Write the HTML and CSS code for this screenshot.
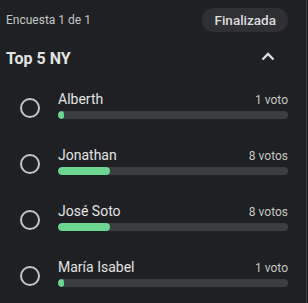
FILE: index.html
```html
<!DOCTYPE html>
<html lang="es">

<head>
    <meta charset="UTF-8">
    <meta name="viewport" content="width=device-width, initial-scale=1.0">
    <title>Encuesta</title>
    <link rel="stylesheet" href="styles.css">
</head>

<body>
    <div class="panel">
        <div class="cabecera">
            <span class="contador">Encuesta 1 de 1</span>
            <span class="estado">Finalizada</span>
        </div>

        <div class="titulo">
            <h2>Top 5 NY</h2>
            <svg class="chevron" width="14" height="9" viewBox="0 0 14 9">
                <path d="M1.5 7.5 L7 2 L12.5 7.5" fill="none" stroke="#dcdcdc" stroke-width="2.4" />
            </svg>
        </div>

        <div class="opciones">
            <div class="opcion">
                <div class="radio"></div>
                <div class="datos">
                    <div class="fila">
                        <span class="nombre">Alberth</span>
                        <span class="votos">1 voto</span>
                    </div>
                    <div class="barra"><div class="relleno" style="width: 2.8%"></div></div>
                </div>
            </div>
            <div class="opcion">
                <div class="radio"></div>
                <div class="datos">
                    <div class="fila">
                        <span class="nombre">Jonathan</span>
                        <span class="votos">8 votos</span>
                    </div>
                    <div class="barra"><div class="relleno" style="width: 22.4%"></div></div>
                </div>
            </div>
            <div class="opcion">
                <div class="radio"></div>
                <div class="datos">
                    <div class="fila">
                        <span class="nombre">José Soto</span>
                        <span class="votos">8 votos</span>
                    </div>
                    <div class="barra"><div class="relleno" style="width: 22.4%"></div></div>
                </div>
            </div>
            <div class="opcion">
                <div class="radio"></div>
                <div class="datos">
                    <div class="fila">
                        <span class="nombre">María Isabel</span>
                        <span class="votos">1 voto</span>
                    </div>
                    <div class="barra"><div class="relleno" style="width: 2.8%"></div></div>
                </div>
            </div>
        </div>
    </div>
</body>

</html>
```

FILE: styles.css
```css
body {
    margin: 0;
    background: #1f2023;
    color: #e3e3e3;
    font-family: Roboto, 'Liberation Sans', sans-serif;
}

.panel {
    width: 282px;
    height: 303px;
    padding: 8px 18px 0 6px;
    border-right: 1px solid #3a3b3e;
    overflow: hidden;
}

.cabecera {
    display: flex;
    justify-content: space-between;
    align-items: center;
    height: 24px;
}

.contador {
    font-size: 12px;
    color: #c4c7c5;
}

.estado {
    background: #2f3033;
    color: #dcdcdc;
    font-size: 13.5px;
    font-weight: 500;
    line-height: 24px;
    padding: 0 12px;
    border-radius: 12px;
}

.titulo {
    display: flex;
    justify-content: space-between;
    align-items: center;
    margin-top: 17px;
    height: 20px;
}

.titulo h2 {
    margin: 0;
    font-size: 16px;
    font-weight: 700;
    line-height: 20px;
    color: #e3e3e3;
}

.chevron {
    margin-right: 13px;
    margin-top: -6px;
}

.opciones {
    display: flex;
    flex-direction: column;
    gap: 28px;
    margin-top: 22px;
}

.opcion {
    display: flex;
    align-items: center;
}

.radio {
    width: 16px;
    height: 16px;
    border: 2px solid #c4c7c5;
    border-radius: 50%;
    margin: 6px 18px 0 14px;
    flex-shrink: 0;
}

.datos {
    flex: 1;
}

.fila {
    display: flex;
    justify-content: space-between;
    align-items: baseline;
    height: 16px;
    line-height: 16px;
}

.nombre {
    font-size: 14px;
    color: #e3e3e3;
}

.votos {
    font-size: 12px;
    color: #c4c7c5;
}

.barra {
    margin-top: 4px;
    height: 8px;
    background: #3c3d40;
    border-radius: 4px;
    overflow: hidden;
}

.relleno {
    height: 100%;
    background: #6ad68f;
    border-radius: 4px;
}
```
